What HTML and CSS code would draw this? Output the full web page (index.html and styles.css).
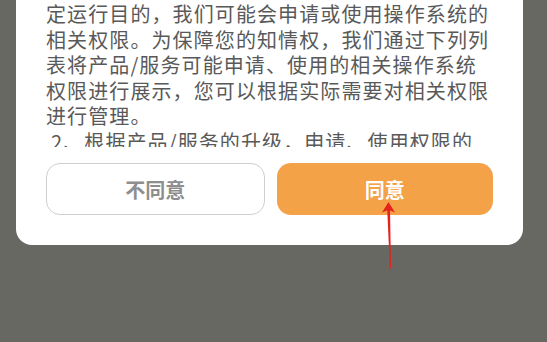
FILE: index.html
```html
<!DOCTYPE html>
<html lang="zh-CN">
<head>
<meta charset="utf-8">
<title>权限说明</title>
<link rel="stylesheet" href="styles.css">
</head>
<body>
<div class="dialog">
  <div class="scroll">
    <p class="para">定运行目的，我们可能会申请或使用操作系统的相关权限。为保障您的知情权，我们通过下列列表将产品/服务可能申请、使用的相关操作系统权限进行展示，您可以根据实际需要对相关权限进行管理。</p>
    <p class="para item">2、根据产品/服务的升级，申请、使用权限的类型与目的可能会有变动，我们将及时根据这些变动对列表进行调整。</p>
  </div>
  <div class="actions">
    <button class="btn btn-decline">不同意</button>
    <button class="btn btn-accept">同意</button>
  </div>
</div>
<svg class="arrow" width="20" height="72" viewBox="378 200 20 72" aria-hidden="true">
  <polygon points="388.5,202 395,212.5 389.6,210.3 387.4,210.3 382,212.5" fill="#e5221d"/>
  <polygon points="387.2,209 390,209 391,268 389.9,269" fill="#e5221d"/>
</svg>
</body>
</html>
```

FILE: styles.css
```css
html, body {
  margin: 0;
  padding: 0;
}
body {
  background: #686863;
  width: 547px;
  height: 342px;
  overflow: hidden;
  position: relative;
  font-family: "Noto Sans CJK SC", "Noto Sans", sans-serif;
}
.dialog {
  width: 447px;
  margin: 0 0 0 16px;
  background: #ffffff;
  border-radius: 0 0 16px 16px;
  padding: 1px 30px 30px;
  display: flex;
  flex-direction: column;
}
.scroll {
  height: 146px;
  overflow: hidden;
  margin-bottom: 16px;
}
.para {
  margin: 0;
  font-size: 20px;
  letter-spacing: 1.1px;
  line-height: 25.6px;
  color: #595959;
}
.item {
  padding-left: 5px;
}
.actions {
  display: flex;
  gap: 12px;
}
.btn {
  flex: 1;
  height: 52px;
  border-radius: 14px;
  font-family: "Noto Sans CJK SC", "Noto Sans", sans-serif;
  font-size: 20px;
  font-weight: bold;
  display: flex;
  align-items: center;
  justify-content: center;
  padding: 0;
  box-sizing: border-box;
}
.btn-decline {
  background: #ffffff;
  border: 1px solid #cfcfcf;
  color: #8e8e8e;
}
.btn-accept {
  background: #f4a247;
  border: none;
  color: #ffffff;
}
.arrow {
  position: absolute;
  left: 378px;
  top: 200px;
}
```
